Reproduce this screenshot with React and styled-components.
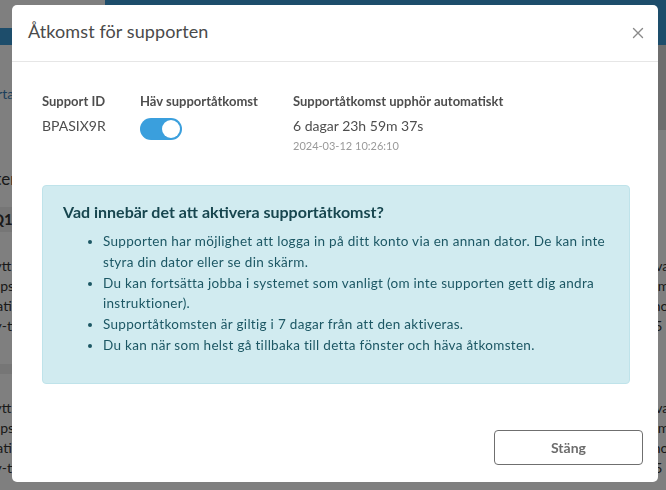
import React, { useState } from 'react'
import styled, { createGlobalStyle } from 'styled-components'

const GlobalStyle = createGlobalStyle`
    html, body {
        margin: 0;
        padding: 0;
        height: 100%;
        overflow: hidden;
        background: #ffffff;
        font-family: 'Lato', 'Liberation Sans', sans-serif;
    }
`

const cards = [
    { title: 'Q1 Nytt projekt', rows: ['Nytt uppdrag', 'Kapslad', 'Statistik', 'Ny-tid'] },
    { title: 'Samlingsprojekt', rows: ['Aktivt', 'Kapslad', 'Statistik', 'Långtid'] },
    { title: 'Arkiv projektnamn', rows: ['Aktiva', 'Kolumn', 'Ekonomi', '2025'] },
]

function Background() {
    return (
        <Page>
            <TopBar>
                <TopRow>
                    <Brand />
                    <BarFill />
                </TopRow>
                <TopStrip />
            </TopBar>
            <Content>
                <Side />
                <Main>
                    <LinkText>Startar</LinkText>
                    <SectionTitle>Projekten</SectionTitle>
                    <Grid>
                        {cards.map((card) => (
                            <Card key={card.title}>
                                <CardHead>{card.title}</CardHead>
                                <CardRows>
                                    {card.rows.map((r) => (
                                        <CardRow key={r}>{r}</CardRow>
                                    ))}
                                </CardRows>
                                <CardBand />
                                <CardRows>
                                    {card.rows.map((r) => (
                                        <CardRow key={r + '2'}>{r}</CardRow>
                                    ))}
                                </CardRows>
                                <CardFoot>Samlingsprojekt</CardFoot>
                            </Card>
                        ))}
                    </Grid>
                </Main>
            </Content>
        </Page>
    )
}

function App() {
    const [on, setOn] = useState(true)
    return (
        <>
            <GlobalStyle />
            <Background />
            <Overlay>
                <Modal>
                    <Header>
                        <Title>Åtkomst för supporten</Title>
                        <Close aria-label="Stäng">
                            <svg width="12" height="12" viewBox="0 0 12 12">
                                <path d="M1.5 1.5 L10.5 10.5 M10.5 1.5 L1.5 10.5" stroke="#8a8a8a" strokeWidth="1.4" strokeLinecap="round" />
                            </svg>
                        </Close>
                    </Header>
                    <Body>
                        <InfoRow>
                            <Col $width="98px">
                                <Label>Support ID</Label>
                                <Value>BPASIX9R</Value>
                            </Col>
                            <Col $width="153px">
                                <Label>Häv supportåtkomst</Label>
                                <Toggle $on={on} onClick={() => setOn(!on)}>
                                    <Knob $on={on} />
                                </Toggle>
                            </Col>
                            <Col>
                                <Label>Supportåtkomst upphör automatiskt</Label>
                                <Value>6 dagar 23h 59m 37s</Value>
                                <Small>2024-03-12 10:26:10</Small>
                            </Col>
                        </InfoRow>
                        <Alert>
                            <AlertTitle>Vad innebär det att aktivera supportåtkomst?</AlertTitle>
                            <List>
                                <li>Supporten har möjlighet att logga in på ditt konto via en annan dator. De kan inte styra din dator eller se din skärm.</li>
                                <li>Du kan fortsätta jobba i systemet som vanligt (om inte supporten gett dig andra instruktioner).</li>
                                <li>Supportåtkomsten är giltig i 7 dagar från att den aktiveras.</li>
                                <li>Du kan när som helst gå tillbaka till detta fönster och häva åtkomsten.</li>
                            </List>
                        </Alert>
                    </Body>
                    <Footer>
                        <Button>Stäng</Button>
                    </Footer>
                </Modal>
            </Overlay>
        </>
    )
}

export default App

const Page = styled.div`
    height: 490px;
    overflow: hidden;
    color: #333;
`
const TopBar = styled.div`
    display: flex;
    flex-direction: column;
`
const TopRow = styled.div`
    display: flex;
    height: 28px;
`
const Brand = styled.div`
    width: 105px;
    background: #ffffff;
`
const BarFill = styled.div`
    flex: 1;
    background: #3a9bd6;
`
const TopStrip = styled.div`
    height: 17px;
    background: #3a9bd6;
`
const Content = styled.div`
    display: flex;
    flex-direction: row-reverse;
`
const Side = styled.div`
    width: 8px;
    height: 85px;
    background: #dcdcdc;
`
const Main = styled.div`
    flex: 1;
    margin-left: -22px;
    padding-top: 40px;
`
const LinkText = styled.div`
    font-size: 14px;
    color: #3a7fb8;
    height: 20px;
`
const SectionTitle = styled.div`
    margin-top: 63px;
    font-size: 17px;
    color: #333;
    margin-left: -30px;
`
const Grid = styled.div`
    display: grid;
    grid-template-columns: 240px 1fr 34px;
    gap: 16px;
    margin-top: 18px;
`
const Card = styled.div`
    background: #fff;
`
const CardHead = styled.div`
    background: #ececec;
    height: 25px;
    line-height: 25px;
    font-weight: 700;
    font-size: 15px;
    padding-left: 14px;
    white-space: nowrap;
    overflow: hidden;
`
const CardRows = styled.div`
    padding: 26px 0 30px 6px;
    display: flex;
    flex-direction: column;
    gap: 4px;
`
const CardRow = styled.div`
    font-size: 14px;
    line-height: 16px;
    white-space: nowrap;
`
const CardBand = styled.div`
    height: 10px;
    background: #ececec;
`
const CardFoot = styled.div`
    font-size: 14px;
    padding-left: 30px;
`

const Overlay = styled.div`
    position: fixed;
    inset: 0;
    background: rgba(0, 0, 0, 0.5);
    display: flex;
    align-items: flex-start;
`
const Modal = styled.div`
    margin: 5px 0 0 12px;
    width: 646px;
    background: #ffffff;
    border-radius: 5px;
    display: flex;
    flex-direction: column;
`
const Header = styled.div`
    display: flex;
    align-items: center;
    justify-content: space-between;
    height: 51px;
    padding: 0 16px 5px;
    border-bottom: 1px solid #e6e6e6;
`
const Title = styled.h2`
    margin: 0;
    font-size: 18px;
    font-weight: 400;
    color: #4a4a4a;
    letter-spacing: 0.1px;
`
const Close = styled.button`
    border: 0;
    background: none;
    padding: 0;
    width: 12px;
    height: 12px;
    margin-right: -2px;
    margin-top: 4px;
    display: flex;
    cursor: pointer;
`
const Body = styled.div`
    padding: 30px 28px 45px 30px;
`
const InfoRow = styled.div`
    display: flex;
    align-items: flex-start;
`
const Col = styled.div`
    width: ${(p) => p.$width || 'auto'};
    flex: ${(p) => (p.$width ? 'none' : '1')};
    display: flex;
    flex-direction: column;
    align-items: flex-start;
`
const Label = styled.div`
    font-size: 13px;
    font-weight: 700;
    color: #4e4e4e;
    line-height: 18px;
`
const Value = styled.div`
    font-size: 14px;
    color: #4e4e4e;
    line-height: 18px;
    margin-top: 7px;
`
const Small = styled.div`
    font-size: 11px;
    color: #9a9a9a;
    margin-top: 4px;
`
const Toggle = styled.button`
    margin-top: 8px;
    width: 42px;
    height: 22px;
    border-radius: 11px;
    border: 0;
    padding: 2px;
    background: ${(p) => (p.$on ? '#3a9fdd' : '#cccccc')};
    display: flex;
    justify-content: ${(p) => (p.$on ? 'flex-end' : 'flex-start')};
    align-items: center;
    cursor: pointer;
`
const Knob = styled.span`
    width: 18px;
    height: 18px;
    border-radius: 50%;
    background: #ffffff;
`
const Alert = styled.div`
    margin-top: 33px;
    background: #d1ebf0;
    border: 1px solid #bfe3ea;
    border-radius: 4px;
    padding: 15px 20px 12px;
    color: #1c5764;
`
const AlertTitle = styled.h4`
    margin: 0;
    font-size: 16px;
    font-weight: 700;
    color: #17464f;
    line-height: 22px;
`
const List = styled.ul`
    margin: 8px 0 15px;
    padding-left: 40px;
    font-size: 13.5px;
    letter-spacing: 0.3px;
    line-height: 20.8px;
`
const Footer = styled.div`
    display: flex;
    justify-content: flex-end;
    padding: 1px 15px 17px;
`
const Button = styled.button`
    width: 149px;
    height: 35px;
    border: 1px solid #6f6f6f;
    border-radius: 4px;
    background: #ffffff;
    font-family: 'Lato', 'Liberation Sans', sans-serif;
    font-size: 14px;
    font-weight: 700;
    color: #6c6c6c;
    cursor: pointer;
`
